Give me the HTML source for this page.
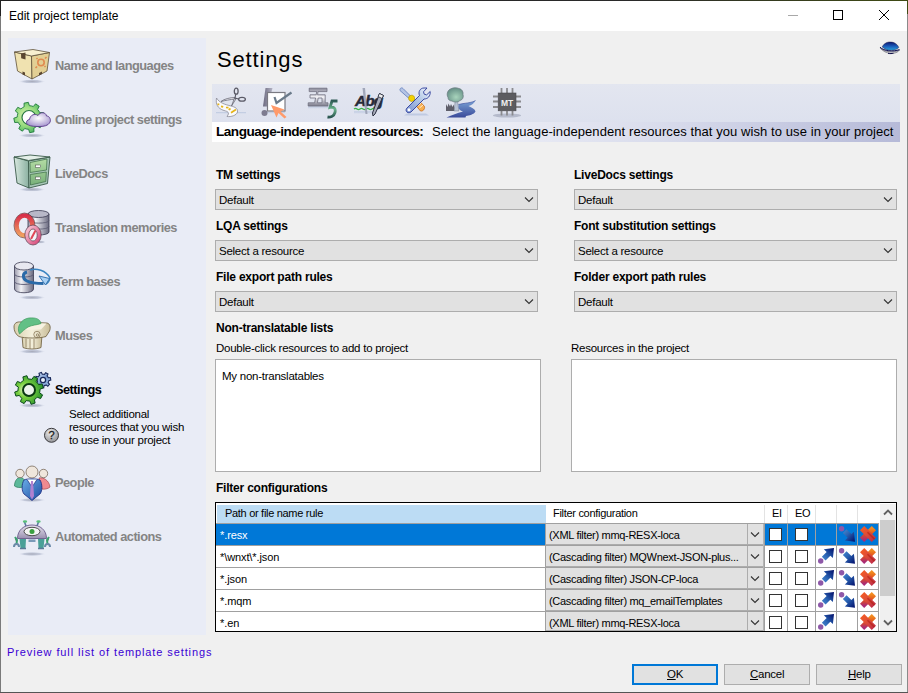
<!DOCTYPE html>
<html><head><meta charset="utf-8">
<style>
*{box-sizing:border-box;margin:0;padding:0}
html,body{width:908px;height:693px;overflow:hidden;background:#f0f0f0;font-family:"Liberation Sans",sans-serif;color:#000}
.a{position:absolute}
.t{position:absolute;white-space:pre;line-height:1;}
.f11{font-size:11.5px;line-height:11px;letter-spacing:-0.25px}
.lbl{font-size:12px;line-height:12px;font-weight:bold;letter-spacing:-0.22px}
.nav{font-size:12.8px;line-height:12px;font-weight:bold;color:#848484;letter-spacing:-0.52px}
.combo{position:absolute;height:21px;background:#e1e1e1;border:1px solid #adadad}
.chev{position:absolute}
.lb{position:absolute;background:#fff;border:1px solid #adadad}
.btn{position:absolute;width:86px;height:21px;background:#e1e1e1;border:1px solid #adadad;font-size:11px;text-align:center}
.gl{position:absolute;background:#a0a0a0}
.hd{font-size:11px;line-height:11px;letter-spacing:-0.3px}
.rw{font-size:11px;line-height:11px;letter-spacing:-0.1px}
.rwc{font-size:11px;line-height:11px;letter-spacing:-0.3px}
.cc{background:#e1e1e1;border-bottom:1px solid #acacac}
.cb{width:13px;height:13px;background:#fff;border:1px solid #333}
</style></head><body>
<!-- window frame -->
<div class="a" style="left:0;top:0;width:908px;height:1px;background:linear-gradient(90deg,#222 0%,#2a2a2a 70%,#3f4b14 100%)"></div>
<div class="a" style="left:0;top:0;width:1px;height:16px;background:#222"></div>
<div class="a" style="left:0;top:16px;width:1px;height:677px;background:#7a7a7a"></div>
<div class="a" style="left:907px;top:0;width:1px;height:14px;background:#3f4b14"></div>
<div class="a" style="left:907px;top:14px;width:1px;height:679px;background:#8a8a8a"></div>
<div class="a" style="left:0;top:692px;width:908px;height:1px;background:#555"></div>
<!-- title bar -->
<div class="a" style="left:1px;top:1px;width:906px;height:30px;background:#fff"></div>
<div class="t" style="left:9px;top:10px;font-size:12px;line-height:12px">Edit project template</div>
<div class="a" style="left:788px;top:15px;width:10px;height:1px;background:#a8a8a8"></div>
<div class="a" style="left:833px;top:10px;width:10px;height:10px;border:1px solid #000"></div>
<svg class="a" style="left:878px;top:9px" width="12" height="12" viewBox="0 0 12 12"><path d="M1 1L11 11M11 1L1 11" stroke="#000" stroke-width="1"/></svg>

<!-- left panel -->
<div class="a" style="left:8px;top:38px;width:198px;height:597px;background:#e9ecf6"></div>
<svg class="a" style="left:0;top:0;pointer-events:none" width="210" height="693">
<defs>
<radialGradient id="nsh" cx="0.5" cy="0.5" r="0.5"><stop offset="0" stop-color="#a8acbc"/><stop offset="0.6" stop-color="#c4cadb"/><stop offset="1" stop-color="#e9ecf6" stop-opacity="0"/></radialGradient>
<linearGradient id="nbox" x1="0" y1="0" x2="1" y2="1"><stop offset="0" stop-color="#efe0ae"/><stop offset="0.5" stop-color="#f6ecc6"/><stop offset="1" stop-color="#d8c488"/></linearGradient>
<radialGradient id="ngear" cx="0.4" cy="0.45" r="0.65"><stop offset="0" stop-color="#e0f4b0"/><stop offset="0.5" stop-color="#98dc80"/><stop offset="1" stop-color="#3aaa5a"/></radialGradient>
<radialGradient id="ngear2" cx="0.35" cy="0.5" r="0.7"><stop offset="0" stop-color="#e8f8c8"/><stop offset="0.35" stop-color="#7ad040"/><stop offset="1" stop-color="#1e8a2a"/></radialGradient>
<radialGradient id="ncloud" cx="0.5" cy="0.4" r="0.6"><stop offset="0" stop-color="#ffffff"/><stop offset="1" stop-color="#a898d0"/></radialGradient>
<linearGradient id="ncab" x1="0" y1="0" x2="1" y2="0"><stop offset="0" stop-color="#d8e8e0"/><stop offset="1" stop-color="#8ab0a0"/></linearGradient>
<linearGradient id="ndraw" x1="0" y1="0" x2="0" y2="1"><stop offset="0" stop-color="#b4dca4"/><stop offset="1" stop-color="#78b07a"/></linearGradient>
<linearGradient id="ndb" x1="0" y1="0" x2="1" y2="0"><stop offset="0" stop-color="#9a9aac"/><stop offset="0.35" stop-color="#f2f2f6"/><stop offset="1" stop-color="#6a6a80"/></linearGradient>
<linearGradient id="nring" x1="0" y1="0" x2="0" y2="1"><stop offset="0" stop-color="#d8304a"/><stop offset="1" stop-color="#f0a060"/></linearGradient>
<linearGradient id="nring2" x1="0" y1="0" x2="1" y2="1"><stop offset="0" stop-color="#f8c8d8"/><stop offset="1" stop-color="#d84878"/></linearGradient>
<linearGradient id="ncol" x1="0" y1="0" x2="1" y2="0"><stop offset="0" stop-color="#d8d0b0"/><stop offset="0.5" stop-color="#f4f0dc"/><stop offset="1" stop-color="#c8bc98"/></linearGradient>
<linearGradient id="nblue" x1="0" y1="0" x2="1" y2="1"><stop offset="0" stop-color="#6aaee8"/><stop offset="1" stop-color="#1e4aa0"/></linearGradient>
<linearGradient id="nsm" x1="0" y1="0" x2="1" y2="1"><stop offset="0" stop-color="#d8e8f8"/><stop offset="0.5" stop-color="#7a9ad0"/><stop offset="1" stop-color="#a8c8e8"/></linearGradient>
<linearGradient id="nrob" x1="0" y1="0" x2="0" y2="1"><stop offset="0" stop-color="#e8e4f0"/><stop offset="1" stop-color="#9a90b0"/></linearGradient>
</defs>
<!-- shadows -->
<g fill="url(#nsh)">
<ellipse cx="32" cy="81.5" rx="14" ry="2.2"/>
<ellipse cx="32" cy="135.5" rx="14" ry="2.2"/>
<ellipse cx="32" cy="189.5" rx="14" ry="2.2"/>
<ellipse cx="40" cy="242" rx="6" ry="1.8"/>
<ellipse cx="32" cy="297.5" rx="14" ry="2.2"/>
<ellipse cx="32" cy="351.5" rx="14" ry="2.2"/>
<ellipse cx="32" cy="405.5" rx="14" ry="2.2"/>
<ellipse cx="32" cy="500" rx="14" ry="2.2"/>
<ellipse cx="32" cy="554" rx="14" ry="2.2"/>
</g>
<!-- box -->
<g stroke="#5e5038" stroke-width="0.8" stroke-linejoin="round">
<path d="M14.5 52 L31.5 56 L32 79 L17.5 71Z" fill="#f0e2b0"/>
<path d="M31.5 56 L49.5 52.5 L47 71 L32 79Z" fill="#e2cf94"/>
<path d="M14.5 52 L33 49.5 L49.5 52.5 L31.5 56Z" fill="#f8f0d0"/>
</g>
<path d="M21 53.5 L25.5 52.5 L25.5 59.5 L21.2 58.3Z" fill="#5a4630"/>
<path d="M22.5 71.5 L25 72.5 L25 75.5 L22.5 74.5Z M39 73 L42 71.5 L42 74 L39 75.5Z" fill="#5a4630"/>
<g fill="none" stroke="#e08a50" stroke-width="1.6"><circle cx="41" cy="62.5" r="3.2"/><path d="M37 66.5l-1.5 1.5M45 58.5l1.5 -1.5M44.5 66l1 1M37.5 59l-1 -1"/></g>
<!-- online gear + cloud -->
<path d="M40.6 119.8 L40.0 121.8 L42.7 124.1 L40.2 127.7 L37.1 126.1 L35.5 127.3 L33.8 128.3 L34.0 131.8 L29.7 132.7 L28.6 129.3 L26.7 129.1 L24.7 128.5 L22.4 131.2 L18.8 128.7 L20.4 125.6 L19.2 124.0 L18.2 122.3 L14.7 122.5 L13.8 118.2 L17.2 117.1 L17.4 115.2 L18.0 113.2 L15.3 110.9 L17.8 107.3 L20.9 108.9 L22.5 107.7 L24.2 106.7 L24.0 103.2 L28.3 102.3 L29.4 105.7 L31.3 105.9 L33.3 106.5 L35.6 103.8 L39.2 106.3 L37.6 109.4 L38.8 111.0 L39.8 112.7 L43.3 112.5 L44.2 116.8 L40.8 117.9Z" fill="url(#ngear)" stroke="#1e7a3a" stroke-width="0.9"/>
<circle cx="29" cy="117.5" r="7" fill="#fff" stroke="#2a7a44" stroke-width="1.2"/>
<path d="M28.5 125 C25.5 124.5 26 119.5 29.5 119.5 C30 115 35 113 38 115.5 C40 111.5 46 112 46.5 116 C50 116 51.5 120.5 49.5 123 C48 125.5 44 126.5 40 126.5 C36 126.5 31 126.5 28.5 125Z" fill="url(#ncloud)" stroke="#5a3a8a" stroke-width="0.9"/>
<!-- cabinet -->
<g stroke="#3a5a4a" stroke-width="0.9" stroke-linejoin="round">
<path d="M14 157 L28.5 161 L29 188 L17 183Z" fill="url(#ncab)"/>
<path d="M28.5 161 L50 157 L47.5 183.5 L29 188Z" fill="#a8c8b8"/>
<path d="M14 157 L30 155 L50 157 L28.5 160.5Z" fill="#e4efe8"/>
</g>
<path d="M30 162.5 L47 159 L46.5 170 L30.2 172.5Z M30.3 174.5 L46.3 172 L45.8 181.5 L30.5 185Z" fill="url(#ndraw)" stroke="#3a6a44" stroke-width="0.7"/>
<rect x="35.5" y="165" width="5" height="2.5" fill="#fff" stroke="#444" stroke-width="0.5"/>
<rect x="35.5" y="177" width="5" height="2.5" fill="#fff" stroke="#444" stroke-width="0.5"/>
<!-- TM -->
<g>
<path d="M28 214 L28 232 C28 236 49 236 49 232 L49 214Z" fill="url(#ndb)" stroke="#3a3a50" stroke-width="0.8"/>
<ellipse cx="38.5" cy="214" rx="10.5" ry="3.5" fill="#b8b8c8" stroke="#3a3a50" stroke-width="0.8"/>
<path d="M28 220.5 C28 224 49 224 49 220.5M28 226.5 C28 230 49 230 49 226.5" fill="none" stroke="#5a5a70" stroke-width="0.8"/>
<ellipse cx="24.5" cy="225.5" rx="8" ry="10" fill="none" stroke="url(#nring)" stroke-width="4.6"/>
<ellipse cx="24.5" cy="225.5" rx="10.5" ry="12.5" fill="none" stroke="#5a3030" stroke-width="0.6"/>
<ellipse cx="33" cy="235" rx="6.2" ry="8" fill="none" stroke="url(#nring2)" stroke-width="3.8"/>
<ellipse cx="33" cy="235" rx="8.2" ry="10" fill="none" stroke="#5a3a4a" stroke-width="0.7"/>
<ellipse cx="33" cy="235" rx="4.2" ry="6" fill="#f4f4fa" stroke="#5a3a4a" stroke-width="0.7"/>
<path d="M31 239 L35.5 230.5" stroke="#e04858" stroke-width="2"/>
</g>
<!-- term bases -->
<g>
<path d="M14.5 266 L14.5 289 C14.5 294 33.5 294 33.5 289 L33.5 266Z" fill="url(#ndb)" stroke="#3a3a50" stroke-width="0.8"/>
<ellipse cx="24" cy="266" rx="9.5" ry="4" fill="#e8e8f0" stroke="#3a3a50" stroke-width="0.8"/>
<path d="M14.5 274 C14.5 278 33.5 278 33.5 274M14.5 281.5 C14.5 285.5 33.5 285.5 33.5 281.5" fill="none" stroke="#5a5a74" stroke-width="0.9"/>
<path d="M27 272 C22 273 22.5 279 27 281 C31 283 38 283.5 43.5 283.5" fill="none" stroke="#2a6aa8" stroke-width="3"/>
<path d="M30 270 C36 268 46 270 50 278 C49.5 281 48 283 46 284" fill="none" stroke="#3a84c0" stroke-width="1.4"/>
<path d="M39 276 L49.5 278.5 L45.5 285Z" fill="#a8d0f4" stroke="#2a6aa8" stroke-width="0.9"/>
</g>
<!-- muses column -->
<g stroke="#6a5a3a" stroke-width="0.8" stroke-linejoin="round">
<path d="M22 335 L23 347.5 C28 349.5 36 349.5 41 347.5 L42 335Z" fill="url(#ncol)"/>
<path d="M14 327 C14 323 17 321.5 21 322 L47 323 C50 323.5 51 327.5 49.5 331 L46 336.5 C40 338.5 24 338.5 19 336.5 C15.5 334.5 14 330.5 14 327Z" fill="url(#ncol)"/>
<path d="M19 323 L46.5 323.5 L41 329.5 L22 330Z" fill="#f6f2e2" stroke="none"/>
</g>
<g stroke="#8a7a5a" stroke-width="0.8" fill="none"><path d="M26 338.5v9M30 339v10M34 339v10"/><circle cx="37" cy="334.5" r="3.2"/><circle cx="37.5" cy="335" r="1.2"/></g>
<path d="M19.5 334 C16 327 21 319 29 318 C35 317.5 40 318.5 41 323.5 C37 325 32 325 28 327 C25 329 22 331.5 19.5 334Z" fill="#62c086" stroke="#3a9a5a" stroke-width="0.7"/>
<!-- settings gears -->
<path d="M48.5 381.7 L48.1 382.7 L49.5 384.3 L47.8 386.2 L46.1 384.9 L45.1 385.4 L44.0 385.7 L43.7 387.8 L41.1 387.6 L41.1 385.5 L40.1 385.0 L39.2 384.4 L37.4 385.4 L35.9 383.3 L37.5 381.9 L37.3 380.9 L37.2 379.7 L35.3 379.0 L36.0 376.5 L38.1 376.9 L38.8 376.1 L39.6 375.3 L39.0 373.3 L41.4 372.4 L42.3 374.2 L43.4 374.2 L44.5 374.4 L45.7 372.7 L48.0 374.0 L47.1 375.9 L47.8 376.7 L48.3 377.7 L50.4 377.6 L50.8 380.1 L48.8 380.6Z" fill="url(#nsm)" stroke="#18285a" stroke-width="1.1"/>
<circle cx="43" cy="380" r="2.6" fill="#e8f0f8" stroke="#18285a" stroke-width="1.2"/>
<path d="M39.9 391.1 L39.6 392.9 L42.6 394.9 L40.6 398.6 L37.3 397.2 L36.0 398.5 L34.4 399.6 L35.1 403.1 L31.1 404.3 L29.8 401.0 L27.9 400.9 L26.1 400.6 L24.1 403.6 L20.4 401.6 L21.8 398.3 L20.5 397.0 L19.4 395.4 L15.9 396.1 L14.7 392.1 L18.0 390.8 L18.1 388.9 L18.4 387.1 L15.4 385.1 L17.4 381.4 L20.7 382.8 L22.0 381.5 L23.6 380.4 L22.9 376.9 L26.9 375.7 L28.2 379.0 L30.1 379.1 L31.9 379.4 L33.9 376.4 L37.6 378.4 L36.2 381.7 L37.5 383.0 L38.6 384.6 L42.1 383.9 L43.3 387.9 L40.0 389.2Z" fill="url(#ngear2)" stroke="#0a4a1a" stroke-width="1"/>
<circle cx="29" cy="390" r="6" fill="#eef4ee" stroke="#0a3a12" stroke-width="2"/>
<!-- people -->
<g stroke="#6a5a4a" stroke-width="0.7">
<path d="M14.5 486 C14.5 480 18 477.5 20 477.5 C23 477.5 26 480 25.5 486 C23 488 17 488 14.5 486Z" fill="#5cb89a" stroke="#2a7a5a"/>
<path d="M39 478 C43 477 49 480 50 487 C48 489 44 489.5 42 489Z" fill="#f08a90" stroke="#a84a50"/>
<circle cx="20" cy="473.5" r="4.2" fill="#efe6dc"/>
<circle cx="43.5" cy="473.5" r="4.2" fill="#efe6dc"/>
<circle cx="32" cy="472" r="6" fill="#efe6dc"/>
</g>
<path d="M24 480 C26 478.5 38 478.5 40 480 C42.5 484 42.5 491 40 494 L32 500.5 L24 494 C21.5 491 21.5 484 24 480Z" fill="url(#nblue)" stroke="#1a2a80" stroke-width="0.8"/>
<path d="M27 479.5 L32 487 L37 479.5" fill="#fff" stroke="#1a2a80" stroke-width="0.7"/>
<path d="M31 481 L33 481 L34 496 L32 499.5 L30 496Z" fill="#b080d0"/>
<!-- robot -->
<g>
<path d="M24.5 522 L26 526 M38.5 522 L37 526" stroke="#5a7aa0" stroke-width="1.6"/>
<ellipse cx="25" cy="521.5" rx="2.2" ry="1.3" fill="#5ac07a"/>
<ellipse cx="38.5" cy="521.5" rx="2.2" ry="1.3" fill="#5ac07a"/>
<path d="M17.5 538.5 C17.5 530 24 525 32 525 C40 525 46.5 530 46.5 538.5Z" fill="url(#nrob)" stroke="#6a5a8a" stroke-width="0.9"/>
<ellipse cx="32" cy="531.5" rx="8" ry="4.2" fill="#f4f4f4" stroke="#505050" stroke-width="1"/>
<circle cx="32" cy="531.5" r="2.5" fill="#3aa040"/>
<path d="M19.5 539 L26 539 L25.5 548 L20.5 548Z M38 539 L44.5 539 L43.5 548 L38.5 548Z" fill="#4aa098"/>
<rect x="28.5" y="539.5" width="7" height="2.5" fill="#7a9ab8"/>
<path d="M15 537 L17 540 L16.5 544 M49 537 L47 540 L47.5 544" stroke="#3aa070" stroke-width="2"/>
<path d="M14 547 C14 543 19 543 19 547M45 547 C45 543 50 543 50 547" fill="none" stroke="#6a8aa8" stroke-width="2"/>
<path d="M20 548.5h6M38 548.5h6" stroke="#5a7a98" stroke-width="1.5"/>
</g>
<!-- help icon -->
<radialGradient id="nq" cx="0.4" cy="0.3" r="0.8"><stop offset="0" stop-color="#ececec"/><stop offset="1" stop-color="#8a8a8e"/></radialGradient><circle cx="51.5" cy="435.3" r="7" fill="url(#nq)" stroke="#3a3a3e" stroke-width="1"/>
<text x="51.5" y="439.3" text-anchor="middle" font-family="Liberation Sans" font-size="11" fill="#1a1a1a" stroke="#1a1a1a" stroke-width="0.3">?</text>
</svg>

<div class="t nav" style="left:55px;top:60px">Name and languages</div>
<div class="t nav" style="left:55px;top:114px">Online project settings</div>
<div class="t nav" style="left:55px;top:168px">LiveDocs</div>
<div class="t nav" style="left:55px;top:222px">Translation memories</div>
<div class="t nav" style="left:55px;top:276px">Term bases</div>
<div class="t nav" style="left:55px;top:330px">Muses</div>
<div class="t nav" style="left:55px;top:384px;color:#000">Settings</div>
<div class="t f11" style="left:69px;top:408px;line-height:13px">Select additional
resources that you wish
to use in your project</div>
<div class="t nav" style="left:55px;top:477px">People</div>
<div class="t nav" style="left:55px;top:531px">Automated actions</div>

<svg class="a" style="left:878px;top:39px" width="24" height="17"><defs><linearGradient id="lg" x1="0" y1="0" x2="0" y2="1"><stop offset="0" stop-color="#0c1670"/><stop offset="0.5" stop-color="#1a5ab8"/><stop offset="1" stop-color="#2aa4dc"/></linearGradient></defs>
<path d="M2.2 8.8 C6 13.5 16 14 21.6 11 C18.5 15.8 7 15.8 2.2 8.8Z" fill="#e4e4ea" stroke="#6a6a72" stroke-width="0.7"/>
<path d="M4.2 7.9 C6 4 10 2.8 12.5 3 C16 3 19.5 5 20.8 8.5 C18 12 9 12.8 4.2 7.9Z" fill="url(#lg)" stroke="#2a2a50" stroke-width="0.5"/>
<path d="M2 8.2 C6 12.2 15 13 21.5 10.6" fill="none" stroke="#0a0a50" stroke-width="1"/>
<path d="M10 14.3 C12 14.8 14 14.6 15.5 14.2" stroke="#10104a" stroke-width="1"/>
</svg>
<!-- heading -->
<div class="t" style="left:217px;top:49px;font-size:22px;line-height:22px;letter-spacing:0.85px">Settings</div>

<!-- toolbar -->
<div class="a" style="left:212px;top:84px;width:688px;height:38px;background:linear-gradient(#e3e6f0,#dde1ee)"></div>
<div class="a" style="left:212px;top:122px;width:688px;height:20px;background:linear-gradient(90deg,#ffffff 0%,#f4f5fa 30%,#d9dcec 65%,#b6bad8 100%)"></div>
<svg class="a" style="left:0;top:0;pointer-events:none" width="908" height="693">
<defs>
<linearGradient id="tsil" x1="0" y1="0" x2="0" y2="1"><stop offset="0" stop-color="#8a8a9a"/><stop offset="0.5" stop-color="#f4f4f8"/><stop offset="1" stop-color="#7a7a8a"/></linearGradient>
<linearGradient id="tgrn" x1="0" y1="0" x2="0" y2="1"><stop offset="0" stop-color="#2f5a55"/><stop offset="0.5" stop-color="#6ab38a"/><stop offset="1" stop-color="#2a5550"/></linearGradient>
<linearGradient id="tbar" x1="0" y1="0" x2="1" y2="0"><stop offset="0" stop-color="#6c6a80"/><stop offset="1" stop-color="#b4b4c4"/></linearGradient>
<linearGradient id="triv" x1="0" y1="0" x2="0" y2="1"><stop offset="0" stop-color="#7aa2d6"/><stop offset="1" stop-color="#3a4a9a"/></linearGradient>
<linearGradient id="ttool" x1="0" y1="1" x2="1" y2="0"><stop offset="0" stop-color="#7890d0"/><stop offset="0.6" stop-color="#b8cce8"/><stop offset="1" stop-color="#f4f8ff"/></linearGradient>
<radialGradient id="ttree" cx="0.55" cy="0.65" r="0.6"><stop offset="0" stop-color="#a8d4bc"/><stop offset="1" stop-color="#6a948a"/></radialGradient>
<linearGradient id="tsh" x1="0" y1="0" x2="0" y2="1"><stop offset="0" stop-color="#b4c2dc"/><stop offset="1" stop-color="#dde2ee" stop-opacity="0"/></linearGradient>
</defs>
<!-- 1 scissors + tape at 212,84 -->
<g transform="translate(212,84)">
<rect x="4" y="28" width="30" height="2.5" fill="url(#tsh)"/>
<path d="M4.5 14 C3.5 20 5.5 24.5 12 26.5 C16 27.5 18 28.5 15 32.5 C19 33 24.5 31.5 25.5 28 C26 24.5 23 23 19 22 C13 20.5 7.5 19 4.5 14Z" fill="#fafafc" stroke="#8a8a96" stroke-width="0.8"/>
<path d="M5.5 20l1.8 0.6M9 22.3l2.2 0.5M14 23.5l2.5 0.2M18.5 24.5l-1.8 1.4M24 25.5l-5 3.2" stroke="#e6b418" stroke-width="1.7"/>
<path d="M9 17.5 C12 15 18 13.5 23 13.5 L23.5 15 C18 15.5 13 16.5 9 17.5Z" fill="#ececf2" stroke="#6a6a76" stroke-width="0.8"/>
<path d="M19.5 22 L22.5 14 L24 14.8 Z" fill="#dcdce4" stroke="#6a6a76" stroke-width="0.8"/>
<ellipse cx="24.2" cy="7.2" rx="1.9" ry="3" fill="none" stroke="#5a5a66" stroke-width="1.3"/>
<ellipse cx="30" cy="15.3" rx="3.4" ry="1.9" fill="none" stroke="#5a5a66" stroke-width="1.3"/>
<path d="M23.8 10 L23 14 L26.5 15" fill="none" stroke="#5a5a66" stroke-width="1.2"/>
</g>
<!-- 2 checkbox at 256,84 -->
<g transform="translate(256,84)">
<rect x="9" y="28" width="20" height="2" fill="url(#tsh)"/>
<path d="M9.5 4 L16.5 4 L12 22.5 L7 22.5Z" fill="url(#tbar)"/>
<circle cx="8.5" cy="29" r="3" fill="#7e7c90"/>
<rect x="11.5" y="8.5" width="17.5" height="18.5" fill="#fff" stroke="#7a7a82" stroke-width="1.2"/>
<path d="M18.5 13 L20.5 19 L35.5 8.5" fill="none" stroke="#6a7a8a" stroke-width="2.2"/>
<path d="M15 21 L28.5 25.5 L24.5 27.5 L30.5 33 L28.5 34.5 L22.5 29 L20.5 33.5Z" fill="#ff9a6a"/>
</g>
<!-- 3 wu5 at 304,84 -->
<g transform="translate(304,84)">
<rect x="4" y="22.5" width="24" height="3" fill="url(#tsh)"/>
<g fill="url(#tsil)" stroke="#6e6e7e" stroke-width="0.8" stroke-linejoin="round">
<path d="M5.2 4.2 H23 V7.6 H14 L13.6 10.8 H21.2 V18.8 H24 V22 H4.2 V18.8 H10.6 L11.6 14 H6 V10.8 H12.2 L12.7 7.6 H5.2Z M14.2 14 L13.4 18.8 H18 V14Z"/>
</g>
<path d="M33.5 17 L28 17 L26 23.5 C30 22.5 32 24.5 31 28.5 C30 32 26.5 33.5 23.5 33" fill="none" stroke="url(#tgrn)" stroke-width="2.8"/>
</g>
<!-- 4 Abg at 350,84 -->
<g transform="translate(350,84)">
<rect x="4" y="27.5" width="22" height="3" fill="url(#tsh)"/>
<path d="M4 25 q1.5 -1.2 3 0 t3 0 t3 0 t3 0 t3 0 t3 0 t2 0" fill="none" stroke="#3cb44a" stroke-width="1.3"/>
<text x="5" y="22" font-family="Liberation Sans" font-weight="bold" font-style="italic" font-size="15.5" fill="#262a3a" stroke="#262a3a" stroke-width="0.5" letter-spacing="-1">Abg</text>
<path d="M12.5 4 L15 4 L17.5 30 L15.5 30Z" fill="#9aa0b2" opacity="0.9"/>
<path d="M29.5 9.5 L33.5 11.5 L25 30 L23 32 L22.5 29 Z" fill="#a9adbc" stroke="#2a2e3e" stroke-width="1"/>
<path d="M29.5 9.5 L33.5 11.5 L32 14.5 L28 12.5Z" fill="#eee" stroke="#2a2e3e" stroke-width="0.8"/>
</g>
<!-- 5 tools at 396,84 -->
<g transform="translate(396,84)">
<path d="M8 31.5 L33 31.5 L30 29.5 L11 29.5Z" fill="#c0cae2"/>
<path d="M4 6.5 C3.5 4.5 5.5 3 7 4.5 L14.5 12 L12.5 14Z" fill="#b4c4e4" stroke="#6a84c0" stroke-width="0.9"/>
<path d="M13 12.5 C15 10.5 18 11 18.5 13.5 L18.5 16.5 L15.5 17.5 C13 17 12 15 13 12.5Z" fill="#f2d000" stroke="#b89800" stroke-width="0.7"/>
<path d="M17.5 18.5 L21.5 15 L28.5 22.5 C29 25 27 27.5 24.5 27Z" fill="#f8b050" stroke="#c86818" stroke-width="0.8"/>
<path d="M19.5 20l4 -3.5M21.5 22l4 -3.5M23.5 24l3.5 -3" stroke="#fff4e0" stroke-width="0.9"/>
<path d="M10.5 24.5 L23.5 11.5 C22 8 24 4 28 4 L31 4 L27.5 7.8 L28.2 10.2 L30.6 10.9 L34.2 7.5 C34.5 12 32 15 28 15 L15 28 C12 30 9 27.5 10.5 24.5Z" fill="url(#ttool)" stroke="#2a3a98" stroke-width="0.9"/>
<circle cx="13" cy="25.8" r="1.5" fill="#fff"/>
</g>
<!-- 6 tree river at 442,84 -->
<g transform="translate(442,84)">
<path d="M4 27 L4 20 L5.5 23 L6.5 19.5 L8 22.5 L9 20 L10.5 23 L11.5 20.5 L12.5 24 L12.5 27Z" fill="#5e5e6a"/>
<path d="M13.2 16.5 L15.6 16.5 L16.8 27 L12.2 27Z" fill="#b8c2d4" stroke="#70788a" stroke-width="0.5"/>
<path d="M6 13.5 C4 10 6 5.5 9 4.8 C11 3.5 15 3.5 17 4.5 C20 5 21.5 8 21 10.5 C22 13 20.5 16 18 16.5 C16 18.5 12 18.5 10 17 C7.5 17 6 15.5 6 13.5Z" fill="url(#ttree)" stroke="#6a7a80" stroke-width="0.7"/>
<path d="M16.5 20.5 C22 19 30 19 33.5 16.5 C32.5 19 29.5 21.2 26.5 22 C30 23.5 33 25 33.5 27.5 C32 30.5 27 31.5 24 32 L23.5 33.5 L4.5 33.5 C10 31 15 29 21 27.5 C18 26.5 16 25 16.5 22Z" fill="url(#triv)"/>
<path d="M16.5 20.5 C22 19 30 19 33.5 16.5" fill="none" stroke="#3a4a9a" stroke-width="0.6"/>
</g>
<!-- 7 MT chip at 488,84 -->
<g transform="translate(488,84)">
<ellipse cx="19" cy="31.5" rx="14" ry="2" fill="#9aa0b4" opacity="0.6"/>
<g stroke="#8a8a8e" stroke-width="1.8">
<path d="M13.5 4v5M19 4v5M24.5 4v5M13.5 27v4.5M19 27v4.5M24.5 27v4.5M5 12.5h5M5 17.5h5M5 23h5M28 12.5h5M28 17.5h5M28 23h5"/>
</g>
<rect x="10.2" y="9" width="17.8" height="17.8" fill="#5c5c60" stroke="#4a4a4e" stroke-width="0.6"/>
<text x="19.1" y="21.5" text-anchor="middle" font-family="Liberation Sans" font-weight="bold" font-size="8.5" fill="#f0f0f0">MT</text>
</g>
</svg>
<div class="t" style="left:216px;top:124.5px;font-size:13.6px;line-height:13.6px;font-weight:bold;letter-spacing:-0.5px">Language-independent resources:</div>
<div class="t" style="left:432px;top:125px;font-size:13px;line-height:13px;letter-spacing:0.08px">Select the language-independent resources that you wish to use in your project</div>

<!-- form -->
<div class="t lbl" style="left:216px;top:169px">TM settings</div>
<div class="t lbl" style="left:574px;top:169px">LiveDocs settings</div>
<div class="combo" style="left:215px;top:189px;width:323px"></div>
<div class="combo" style="left:574px;top:189px;width:323px"></div>
<div class="t f11" style="left:219px;top:195px">Default</div>
<div class="t f11" style="left:578px;top:195px">Default</div>

<div class="t lbl" style="left:216px;top:220px">LQA settings</div>
<div class="t lbl" style="left:574px;top:220px">Font substitution settings</div>
<div class="combo" style="left:215px;top:240px;width:323px"></div>
<div class="combo" style="left:574px;top:240px;width:323px"></div>
<div class="t f11" style="left:219px;top:246px">Select a resource</div>
<div class="t f11" style="left:578px;top:246px">Select a resource</div>

<div class="t lbl" style="left:216px;top:271px">File export path rules</div>
<div class="t lbl" style="left:574px;top:271px">Folder export path rules</div>
<div class="combo" style="left:215px;top:291px;width:323px"></div>
<div class="combo" style="left:574px;top:291px;width:323px"></div>
<div class="t f11" style="left:219px;top:297px">Default</div>
<div class="t f11" style="left:578px;top:297px">Default</div>

<svg class="a" style="left:0;top:0" width="908" height="693">
<g fill="none" stroke="#333" stroke-width="1.1">
<path d="M525 197.5l4 4 4-4"/><path d="M884 197.5l4 4 4-4"/>
<path d="M525 248.5l4 4 4-4"/><path d="M884 248.5l4 4 4-4"/>
<path d="M525 299.5l4 4 4-4"/><path d="M884 299.5l4 4 4-4"/>
</g></svg>

<div class="t lbl" style="left:216px;top:322px">Non-translatable lists</div>
<div class="t f11" style="left:216px;top:343px">Double-click resources to add to project</div>
<div class="t f11" style="left:571px;top:343px">Resources in the project</div>
<div class="lb" style="left:215px;top:359px;width:326px;height:113px"></div>
<div class="lb" style="left:571px;top:359px;width:326px;height:113px"></div>
<div class="t f11" style="left:222px;top:371px">My non-translatables</div>

<!-- filter grid -->
<div class="t lbl" style="left:216px;top:482px">Filter configurations</div>
<div id="grid"><svg width="0" height="0" style="position:absolute"><defs>
<linearGradient id="gb" x1="0" y1="1" x2="1" y2="0"><stop offset="0" stop-color="#4a8ad0"/><stop offset="0.4" stop-color="#2a64b4"/><stop offset="1" stop-color="#000c68"/></linearGradient>
<linearGradient id="gb2" x1="0" y1="0" x2="1" y2="1"><stop offset="0" stop-color="#4a8ad0"/><stop offset="0.4" stop-color="#2a64b4"/><stop offset="1" stop-color="#000c68"/></linearGradient>
<linearGradient id="gx" x1="0" y1="0" x2="0" y2="1"><stop offset="0" stop-color="#f28c20"/><stop offset="0.5" stop-color="#e2501c"/><stop offset="1" stop-color="#a82a78"/></linearGradient>
<linearGradient id="gx2" x1="0" y1="0" x2="1" y2="1"><stop offset="0" stop-color="#f25a26"/><stop offset="0.5" stop-color="#dc4a3a"/><stop offset="1" stop-color="#c0304a"/></linearGradient>
<g id="aup"><circle cx="4.7" cy="15" r="2.7" fill="#8e58a8"/><path d="M18 2L16.9 12 14.34 9.69 9.54 14.49 5.86 10.81 10.66 6.01 7.8 3.3Z" fill="url(#gb)"/></g>
<g id="adn"><circle cx="4.6" cy="4.7" r="2.7" fill="#8e58a8"/><path d="M18 17.7L16.9 7.7 14.34 10.01 9.54 5.21 5.86 8.89 10.66 13.69 7.8 16.4Z" fill="url(#gb2)"/></g>
<g id="xx"><path d="M15.9 4.1L4.1 15.9" stroke="url(#gx)" stroke-width="6"/><path d="M4.1 4.1L15.9 15.9" stroke="url(#gx2)" stroke-width="6"/><path d="M9.5 8.3L16.5 15.3" stroke="#b01e08" stroke-width="1.6" opacity="0.55"/></g>
</defs></svg>
<div class="a" style="left:215px;top:502px;width:682px;height:130px;border:1px solid #000;background:#fff"></div>
<div class="a" style="left:217px;top:505px;width:329px;height:18px;background:#bcdcf4"></div>
<div class="a" style="left:764px;top:505px;width:1px;height:18px;background:#e3e3e3"></div>
<div class="a" style="left:787px;top:505px;width:1px;height:18px;background:#e3e3e3"></div>
<div class="a" style="left:815px;top:505px;width:1px;height:18px;background:#e3e3e3"></div>
<div class="a" style="left:836px;top:505px;width:1px;height:18px;background:#e3e3e3"></div>
<div class="a" style="left:857px;top:505px;width:1px;height:18px;background:#e3e3e3"></div>
<div class="a" style="left:216px;top:523px;width:663px;height:1px;background:#a0a0a0"></div>
<div class="t hd" style="left:225px;top:508px">Path or file name rule</div>
<div class="t hd" style="left:553px;top:508px">Filter configuration</div>
<div class="t hd" style="left:772px;top:508px">EI</div>
<div class="t hd" style="left:795px;top:508px">EO</div>
<div class="a" style="left:216px;top:524px;width:329px;height:21px;background:#0078d7"></div>
<div class="a" style="left:765px;top:524px;width:22px;height:21px;background:#0078d7"></div>
<div class="a" style="left:788px;top:524px;width:27px;height:21px;background:#0078d7"></div>
<div class="a" style="left:816px;top:524px;width:20px;height:21px;background:#0078d7"></div>
<div class="a" style="left:837px;top:524px;width:20px;height:21px;background:#0078d7"></div>
<div class="a" style="left:858px;top:524px;width:20px;height:21px;background:#0078d7"></div>
<div class="gl" style="left:216px;top:545px;width:663px;height:1px"></div>
<div class="a cc" style="left:546px;top:524px;width:218px;height:21px"></div>
<div class="a" style="left:747px;top:524px;width:1px;height:20px;background:#acacac"></div>
<div class="t rw" style="left:220px;top:530px;color:#fff">*.resx</div>
<div class="t rwc" style="left:549px;top:530px">(XML filter) mmq-RESX-loca</div>
<div class="a cb" style="left:769px;top:528px"></div>
<div class="a cb" style="left:795px;top:528px"></div>
<svg class="a" style="left:837px;top:524px" width="20" height="21"><use href="#adn"/></svg>
<svg class="a" style="left:858px;top:524px" width="20" height="21"><use href="#xx"/></svg>
<svg class="a" style="left:750px;top:532px" width="10" height="6"><path d="M1 0.5l4 4 4-4" fill="none" stroke="#333" stroke-width="1.1"/></svg>
<div class="gl" style="left:216px;top:567px;width:663px;height:1px"></div>
<div class="a cc" style="left:546px;top:546px;width:218px;height:21px"></div>
<div class="a" style="left:747px;top:546px;width:1px;height:20px;background:#acacac"></div>
<div class="t rw" style="left:220px;top:552px;color:#000">*\wnxt\*.json</div>
<div class="t rwc" style="left:549px;top:552px">(Cascading filter) MQWnext-JSON-plus...</div>
<div class="a cb" style="left:769px;top:550px"></div>
<div class="a cb" style="left:795px;top:550px"></div>
<svg class="a" style="left:816px;top:546px" width="20" height="21"><use href="#aup"/></svg>
<svg class="a" style="left:837px;top:546px" width="20" height="21"><use href="#adn"/></svg>
<svg class="a" style="left:858px;top:546px" width="20" height="21"><use href="#xx"/></svg>
<svg class="a" style="left:750px;top:554px" width="10" height="6"><path d="M1 0.5l4 4 4-4" fill="none" stroke="#333" stroke-width="1.1"/></svg>
<div class="gl" style="left:216px;top:589px;width:663px;height:1px"></div>
<div class="a cc" style="left:546px;top:568px;width:218px;height:21px"></div>
<div class="a" style="left:747px;top:568px;width:1px;height:20px;background:#acacac"></div>
<div class="t rw" style="left:220px;top:574px;color:#000">*.json</div>
<div class="t rwc" style="left:549px;top:574px">(Cascading filter) JSON-CP-loca</div>
<div class="a cb" style="left:769px;top:572px"></div>
<div class="a cb" style="left:795px;top:572px"></div>
<svg class="a" style="left:816px;top:568px" width="20" height="21"><use href="#aup"/></svg>
<svg class="a" style="left:837px;top:568px" width="20" height="21"><use href="#adn"/></svg>
<svg class="a" style="left:858px;top:568px" width="20" height="21"><use href="#xx"/></svg>
<svg class="a" style="left:750px;top:576px" width="10" height="6"><path d="M1 0.5l4 4 4-4" fill="none" stroke="#333" stroke-width="1.1"/></svg>
<div class="gl" style="left:216px;top:611px;width:663px;height:1px"></div>
<div class="a cc" style="left:546px;top:590px;width:218px;height:21px"></div>
<div class="a" style="left:747px;top:590px;width:1px;height:20px;background:#acacac"></div>
<div class="t rw" style="left:220px;top:596px;color:#000">*.mqm</div>
<div class="t rwc" style="left:549px;top:596px">(Cascading filter) mq_emailTemplates</div>
<div class="a cb" style="left:769px;top:594px"></div>
<div class="a cb" style="left:795px;top:594px"></div>
<svg class="a" style="left:816px;top:590px" width="20" height="21"><use href="#aup"/></svg>
<svg class="a" style="left:837px;top:590px" width="20" height="21"><use href="#adn"/></svg>
<svg class="a" style="left:858px;top:590px" width="20" height="21"><use href="#xx"/></svg>
<svg class="a" style="left:750px;top:598px" width="10" height="6"><path d="M1 0.5l4 4 4-4" fill="none" stroke="#333" stroke-width="1.1"/></svg>
<div class="a cc" style="left:546px;top:612px;width:218px;height:19px"></div>
<div class="a" style="left:747px;top:612px;width:1px;height:19px;background:#acacac"></div>
<div class="t rw" style="left:220px;top:618px;color:#000">*.en</div>
<div class="t rwc" style="left:549px;top:618px">(XML filter) mmq-RESX-loca</div>
<div class="a cb" style="left:769px;top:616px"></div>
<div class="a cb" style="left:795px;top:616px"></div>
<svg class="a" style="left:816px;top:612px" width="20" height="21"><use href="#aup"/></svg>
<svg class="a" style="left:858px;top:612px" width="20" height="21"><use href="#xx"/></svg>
<svg class="a" style="left:750px;top:620px" width="10" height="6"><path d="M1 0.5l4 4 4-4" fill="none" stroke="#333" stroke-width="1.1"/></svg>
<div class="gl" style="left:545px;top:524px;width:1px;height:107px"></div>
<div class="gl" style="left:764px;top:524px;width:1px;height:107px"></div>
<div class="gl" style="left:787px;top:524px;width:1px;height:107px"></div>
<div class="gl" style="left:815px;top:524px;width:1px;height:107px"></div>
<div class="gl" style="left:836px;top:524px;width:1px;height:107px"></div>
<div class="gl" style="left:857px;top:524px;width:1px;height:107px"></div>
<div class="gl" style="left:878px;top:524px;width:1px;height:107px"></div>
<div class="a" style="left:763px;top:524px;width:1px;height:107px;background:#b4b4b4"></div>
<div class="a" style="left:879px;top:503px;width:17px;height:128px;background:#f0f0f0;border-left:1px solid #fff;border-top:1px solid #fff"></div>
<div class="a" style="left:880px;top:520px;width:15px;height:76px;background:#cdcdcd"></div>
<svg class="a" style="left:882px;top:507px" width="12" height="10"><path d="M2 7.5l4-4 4 4" fill="none" stroke="#606060" stroke-width="1.8"/></svg>
<svg class="a" style="left:882px;top:618px" width="12" height="10"><path d="M2 2.5l4 4 4-4" fill="none" stroke="#606060" stroke-width="1.8"/></svg></div>

<!-- bottom -->
<div class="t f11" style="left:7px;top:647px;color:#3a00d4;letter-spacing:0.9px;font-size:11px">Preview full list of template settings</div>
<div class="btn" style="left:632px;top:664px;border:2px solid #0078d7"></div>
<div class="btn" style="left:724px;top:664px"></div>
<div class="btn" style="left:816px;top:664px"></div>
<div class="t f11" style="left:667px;top:669px"><u>O</u>K</div>
<div class="t f11" style="left:750px;top:669px"><u>C</u>ancel</div>
<div class="t f11" style="left:848px;top:669px"><u>H</u>elp</div>

</body></html>
